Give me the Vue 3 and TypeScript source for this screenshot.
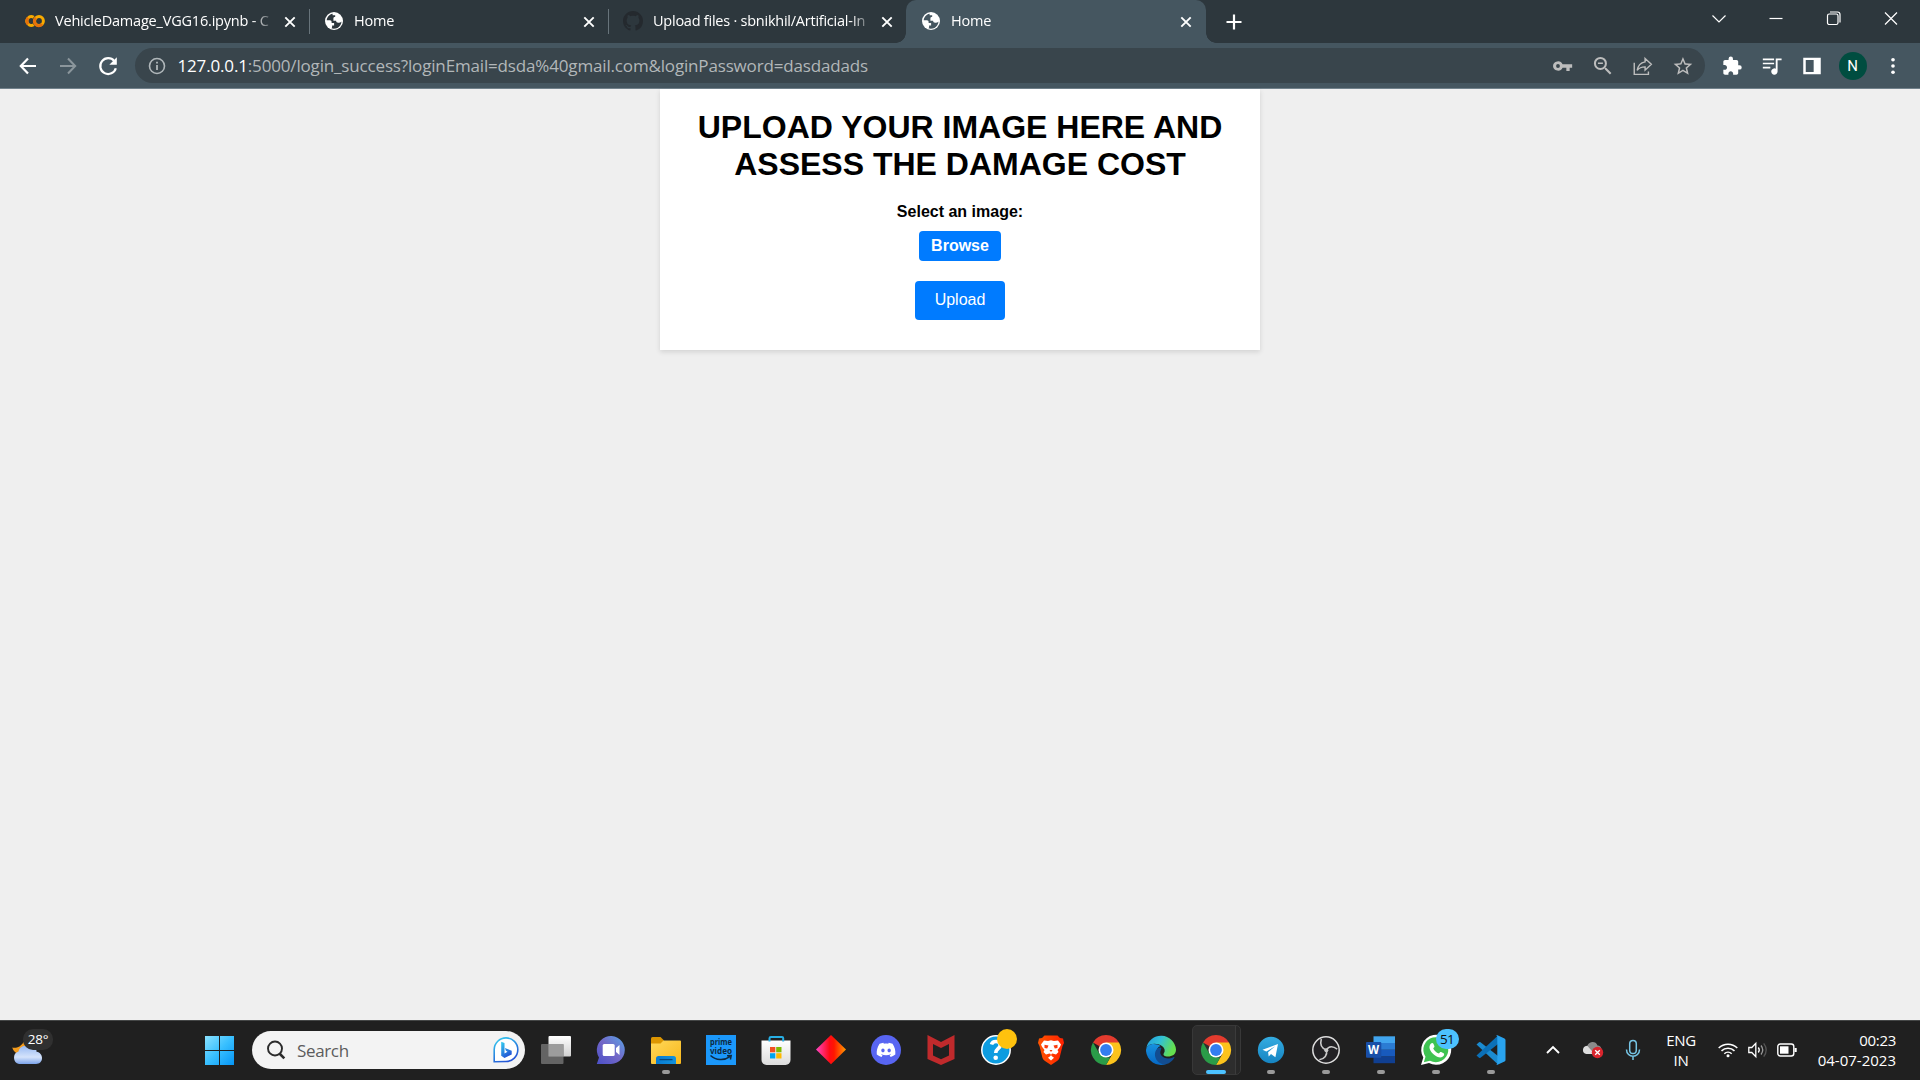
<script setup lang="ts">
interface Tab {
  title: string
  icon: 'colab' | 'globe' | 'github'
  active?: boolean
  divider?: boolean
}

interface App {
  name: string
  state?: 'open' | 'active'
}

const tabs: Tab[] = [
  { title: 'VehicleDamage_VGG16.ipynb - C', icon: 'colab', divider: true },
  { title: 'Home', icon: 'globe', divider: true },
  { title: 'Upload files · sbnikhil/Artificial-In', icon: 'github' },
  { title: 'Home', icon: 'globe', active: true },
]

const apps: App[] = [
  { name: 'taskview' },
  { name: 'chat' },
  { name: 'explorer', state: 'open' },
  { name: 'prime' },
  { name: 'store' },
  { name: 'diamond' },
  { name: 'discord' },
  { name: 'mcafee' },
  { name: 'help' },
  { name: 'brave' },
  { name: 'chrome' },
  { name: 'edge' },
  { name: 'chrome', state: 'active' },
  { name: 'telegram', state: 'open' },
  { name: 'obs', state: 'open' },
  { name: 'word', state: 'open' },
  { name: 'whatsapp', state: 'open' },
  { name: 'vscode', state: 'open' },
]
</script>

<template>
  <div class="screen">
    <header class="tabstrip">
      <div class="tabs">
        <div v-for="(tab, i) in tabs" :key="i" class="tab" :class="[tab.icon, { active: tab.active, divider: tab.divider }]">
          <svg v-if="tab.icon === 'colab'" class="favicon" viewBox="0 0 20 20" fill="none" stroke-width="3">
            <circle cx="14" cy="10" r="4.4" stroke="#f9ab00" />
            <path d="M10.9 6.9a4.4 4.4 0 1 0 6.2 6.2" stroke="#e8710a" />
            <path d="M8.7 6.3A4.4 4.4 0 1 0 8.7 13.7" stroke="#f9ab00" />
            <path d="M3.2 6.9a4.4 4.4 0 0 0 0 6.2" stroke="#e8710a" />
          </svg>
          <svg v-else-if="tab.icon === 'globe'" class="favicon" viewBox="0 0 20 20">
            <circle cx="9" cy="10" r="9" fill="#fff" />
            <path class="sea" d="M7.600 2.700C4.400 3.300 2 6 1.700 9.200h3.200c1.200 0 1.700.8 1.700 1.800v1.100h2.500v2.500h-2v1.400c0 .7-.4 1.200-.9 1.300 3.300 1.200 7.200 0 9.100-3.100.8-1.200 1.100-2.600 1.100-3.800-.8 1-2 1.300-3.100 1.300-1.500 0-2.200-.8-2.200-2H8.400V7.500c0-1.100.7-1.800 1.800-1.800V4.200H7.600z" />
          </svg>
          <svg v-else class="favicon" viewBox="0 0 16 16" fill="#24292e">
            <path d="M8 0C3.580 0 0 3.580 0 8c0 3.540 2.290 6.530 5.470 7.590.4.070.55-.17.55-.38 0-.19-.01-.82-.01-1.490-2.010.37-2.530-.49-2.690-.94-.09-.23-.48-.94-.82-1.130-.28-.15-.68-.52-.01-.53.63-.01 1.080.58 1.230.82.72 1.210 1.870.87 2.330.66.070-.52.28-.87.51-1.070-1.780-.2-3.640-.89-3.640-3.950 0-.87.31-1.590.82-2.150-.08-.2-.36-1.020.08-2.120 0 0 .67-.21 2.200.82.64-.18 1.320-.27 2-.27.68 0 1.360.09 2 .27 1.530-1.040 2.200-.82 2.200-.82.44 1.100.16 1.920.08 2.120.51.56.82 1.270.82 2.150 0 3.070-1.870 3.750-3.650 3.950.29.25.54.73.54 1.480 0 1.070-.01 1.930-.01 2.200 0 .21.15.46.55.38A8.013 8.013 0 0016 8c0-4.420-3.580-8-8-8z" />
          </svg>
          <span class="title">{{ tab.title }}</span>
          <svg class="close" viewBox="0 0 12 12"><path d="M1.300 1.300l9.400 9.400M10.700 1.300l-9.400 9.400" stroke="#fff" stroke-width="1.900" /></svg>
        </div>
      </div>
      <svg class="plus" viewBox="0 0 16 16"><path d="M8 .5v15M.5 8h15" stroke="#fff" stroke-width="2.200" /></svg>
      <div class="window-controls">
        <svg viewBox="0 0 16 16"><path d="M1.500 5.500L8 12l6.500-6.500" /></svg>
        <svg viewBox="0 0 16 16"><path d="M1.500 8.500h13" /></svg>
        <svg viewBox="0 0 16 16"><rect x="1.500" y="4" width="10.500" height="10.500" rx="1.800" /><path d="M4 2h7.500a2.500 2.500 0 0 1 2.500 2.500v8" /></svg>
        <svg viewBox="0 0 16 16"><path d="M2 2.500l12 12M14 2.500l-12 12" /></svg>
      </div>
    </header>

    <div class="toolbar">
      <div class="nav">
        <svg viewBox="0 0 20 20"><path d="M18 10H3M10 2.500L2.800 10l7.200 7.500" fill="none" stroke="#fff" stroke-width="2.200" /></svg>
        <svg viewBox="0 0 20 20"><path d="M2 10h15M10 2.500l7.200 7.500-7.200 7.500" fill="none" stroke="#8b969c" stroke-width="2" /></svg>
        <svg viewBox="0 0 20 20"><path d="M16.300 5.100A7.900 7.900 0 1 0 17.800 12.200" fill="none" stroke="#fff" stroke-width="2.200" /><path d="M18.800 1.200v7.500h-7.500z" fill="#fff" /></svg>
      </div>
      <div class="omnibox">
        <svg class="info" viewBox="0 0 18 18"><circle cx="9" cy="9" r="7.500" fill="none" stroke="#b0b7ba" stroke-width="1.600" /><path d="M9 8v5M9 4.800v1.700" stroke="#b0b7ba" stroke-width="1.800" /></svg>
        <span class="url"><b>127.0.0.1</b>:5000/login_success?loginEmail=dsda%40gmail.com&amp;loginPassword=dasdadads</span>
        <div class="omni-actions">
          <svg viewBox="0 0 24 24" fill="#bdbdbd"><path d="M11.500 10A6 6 0 0 0 0 12a6 6 0 0 0 11.500 2H16v4h4v-4h3v-4zM6 14.300a2.300 2.300 0 1 1 0-4.600 2.300 2.300 0 0 1 0 4.600z" /></svg>
          <svg viewBox="0 0 24 24" fill="#bdbdbd"><path d="M15.500 14h-.79l-.28-.27A6.471 6.471 0 0 0 16 9.500 6.500 6.500 0 1 0 9.500 16c1.610 0 3.090-.59 4.230-1.570l.27.28v.79l5 4.990L20.490 19zm-6 0C7.010 14 5 11.990 5 9.500S7.010 5 9.500 5 14 7.010 14 9.500 11.990 14 9.500 14zM7 8.700h5v1.500H7z" transform="translate(-2.500 -2.500) scale(1.200)" /></svg>
          <svg viewBox="0 0 24 24" fill="none" stroke="#bdbdbd" stroke-width="1.700"><path d="M1.500 8v14h17v-3.500" /><path d="M14.500 3l7.500 7-7.500 7v-4c-4 0-7.300 1.300-9.500 4.300.8-5.300 4-9.300 9.500-10.300z" /></svg>
          <svg viewBox="0 0 24 24" fill="#bdbdbd"><path d="M22 9.240l-7.190-.62L12 2 9.190 8.630 2 9.240l5.460 4.730L5.820 21 12 17.270 18.180 21l-1.630-7.030L22 9.240zM12 15.400l-3.760 2.270 1-4.280-3.320-2.880 4.380-.38L12 6.100l1.710 4.040 4.380.38-3.320 2.880 1 4.280z" transform="translate(-1.500 -1) scale(1.120)" /></svg>
        </div>
      </div>
      <div class="extensions">
        <svg viewBox="0 0 24 24" fill="#fff"><path transform="translate(-.5 -.5) scale(1.050)" d="M20.500 11H19V7c0-1.100-.9-2-2-2h-4V3.500a2.500 2.500 0 0 0-5 0V5H4c-1.100 0-1.990.9-1.990 2v3.800H3.500c1.490 0 2.700 1.210 2.700 2.700s-1.210 2.700-2.700 2.700H2V20c0 1.100.9 2 2 2h3.800v-1.500c0-1.490 1.210-2.700 2.700-2.700s2.700 1.210 2.700 2.700V22H17c1.100 0 2-.9 2-2v-4h1.500a2.500 2.500 0 0 0 0-5z" /></svg>
        <svg viewBox="0 0 24 24" fill="#fff"><path d="M14.500 3H1v2h13.500zM14.500 8H1v2h13.500zM1 15h9v-2H1zM16.500 3v12.200a3.800 3.800 0 1 0 2.200 3.500V5.200h4.800V3z" /></svg>
        <svg viewBox="0 0 24 24"><path d="M1.500 2h21v20h-21zM4.500 4.800v14.400H14V4.800z" fill="#fff" fill-rule="evenodd" /></svg>
        <span class="avatar">N</span>
        <svg class="more" viewBox="0 0 24 24" fill="#fff"><circle cx="12" cy="4.500" r="2.200" /><circle cx="12" cy="12" r="2.200" /><circle cx="12" cy="19.500" r="2.200" /></svg>
      </div>
    </div>

    <main class="page">
      <section class="card">
        <h1>UPLOAD YOUR IMAGE HERE AND ASSESS THE DAMAGE COST</h1>
        <label class="prompt">Select an image:</label>
        <label class="browse">Browse</label>
        <button type="button" class="upload">Upload</button>
      </section>
    </main>

    <footer class="taskbar">
      <div class="weather">
        <svg viewBox="0 0 32 26">
          <defs><linearGradient id="cloud" x1="0" y1="0" x2="0" y2="1"><stop offset="0" stop-color="#8fb4f2" /><stop offset=".65" stop-color="#d5e3fb" /><stop offset="1" stop-color="#7ba3ea" /></linearGradient></defs>
          <path d="M.3 8.500C4 9.500 9 8 11.500 3c4 3 3 10-2 12-4 1-8-2-9.200-6.500z" fill="#f29b1d" />
          <path d="M7 25a6.500 6.500 0 0 1-.5-12.500C7.500 8 11 6.500 14 7c3-3 8-2 9.500 2 1 2 1 3 1 3.800C32 14 32 25 24 25z" fill="url(#cloud)" />
        </svg>
        <span class="temp">28°</span>
      </div>

      <svg class="start" viewBox="0 0 29 29">
        <defs><linearGradient id="win" x1="0" y1="0" x2="1" y2="1"><stop offset="0" stop-color="#8be2ff" /><stop offset=".5" stop-color="#38bfff" /><stop offset="1" stop-color="#0595f5" /></linearGradient></defs>
        <path d="M0 0h14v14H0zM15 0h14v14H15zM0 15h14v14H0zM15 15h14v14H15z" fill="url(#win)" />
      </svg>

      <div class="search">
        <svg class="lens" viewBox="0 0 20 20"><circle cx="9" cy="8.500" r="7" fill="none" stroke="#2b2b2b" stroke-width="1.900" /><path d="M13.500 13.500l4.800 4.800" stroke="#2b2b2b" stroke-width="2.600" /></svg>
        <span>Search</span>
        <svg class="bing" viewBox="0 0 26 26">
          <defs><linearGradient id="bing" x1="0" y1="0" x2=".5" y2="1"><stop offset="0" stop-color="#35d0f0" /><stop offset="1" stop-color="#2355d5" /></linearGradient></defs>
          <path d="M1.200 24.800V12.500A11.800 11.800 0 1 1 13 24.500z" fill="#fff" stroke="url(#bing)" stroke-width="1.600" />
          <path d="M8.200 4.800l3.300 1.300v10.300l3-1.700-1.600-1-1-2.800 6.800 2.900v3.700L11.500 21l-3.300-2.200z" fill="url(#bing)" />
        </svg>
      </div>

      <div class="apps">
        <div v-for="(app, i) in apps" :key="i" class="app" :class="app.state">
          <svg v-if="app.name === 'taskview'" viewBox="0 0 30 30">
            <defs><linearGradient id="tv" x1="0" y1="0" x2="0" y2="1"><stop offset="0" stop-color="#fff" /><stop offset="1" stop-color="#d0d0d0" /></linearGradient></defs>
            <rect x="7.500" y="1" width="22.500" height="20.500" rx="1" fill="url(#tv)" /><rect y="9" width="22.500" height="20" rx="1" fill="#6c6c6c" fill-opacity=".9" /><path d="M7.500 9h15v12.500h-15z" fill="#9c9c9c" />
          </svg>
          <svg v-else-if="app.name === 'chat'" viewBox="0 0 30 30">
            <defs><linearGradient id="chat" x1="0" y1="1" x2="1" y2="0"><stop offset="0" stop-color="#4b50c8" /><stop offset=".5" stop-color="#7367c7" /><stop offset="1" stop-color="#58a5e8" /></linearGradient></defs>
            <path d="M.8 29l2.200-6.500A14 14 0 1 1 15 29z" fill="url(#chat)" /><rect x="6.700" y="9" width="12" height="12" rx="1.500" fill="#fff" /><path d="M20 13l3.500-3v10L20 17z" fill="#fff" />
          </svg>
          <svg v-else-if="app.name === 'explorer'" viewBox="0 0 30 30">
            <defs><linearGradient id="fold" x1="0" y1="0" x2="1" y2="1"><stop offset="0" stop-color="#ffd85a" /><stop offset="1" stop-color="#f9b81b" /></linearGradient><linearGradient id="fblue" x1="0" y1="0" x2="1" y2="0"><stop offset="0" stop-color="#087bd2" /><stop offset="1" stop-color="#1292dc" /></linearGradient></defs>
            <path d="M0 3.500Q0 2 1.500 2h8l3.500 3.500V9H0z" fill="#dc9602" /><path d="M0 8.500h9.500l3-3H29q1 0 1 1V28q0 1-1 1H1q-1 0-1-1z" fill="url(#fold)" /><path d="M5 29v-5.500q0-2.500 2.500-2.500h15q2.500 0 2.500 2.500V29z" fill="url(#fblue)" /><path d="M8.500 24.600h13" stroke="#07487e" stroke-width="1.300" />
          </svg>
          <svg v-else-if="app.name === 'prime'" viewBox="0 0 30 30">
            <path d="M0 0h30v30H0z" fill="#1b98fb" />
            <text x="4" y="10" textLength="22" lengthAdjust="spacingAndGlyphs" class="prime-text">prime</text>
            <text x="4" y="18.500" textLength="22" lengthAdjust="spacingAndGlyphs" class="prime-text">video</text>
            <path d="M4.500 20.500c5.500 5 13.500 5.500 19.500 1.200M21 20.700l4.200-.2-.8 4" fill="none" stroke="#0d2a42" stroke-width="1.500" />
          </svg>
          <svg v-else-if="app.name === 'store'" viewBox="0 0 30 30">
            <defs><linearGradient id="bag" x1="0" y1="0" x2="0" y2="1"><stop offset="0" stop-color="#fff" /><stop offset="1" stop-color="#dcdcdc" /></linearGradient></defs>
            <path d="M.5 5.500h29V25a5 5 0 0 1-5 5h-19a5 5 0 0 1-5-5z" fill="url(#bag)" /><path d="M8.500 6.500V3.300Q8.500 2 10 2h11q1.200 0 1.200 1.300v3.200" fill="none" stroke="#27afe5" stroke-width="2" /><path d="M9 12h5.300v5.300H9z" fill="#f25022" /><path d="M15.200 12h5.300v5.300h-5.300z" fill="#7fba00" /><path d="M9 18.200h5.300v5.300H9z" fill="#00a4ef" /><path d="M15.200 18.200h5.300v5.300h-5.300z" fill="#ffb900" />
          </svg>
          <svg v-else-if="app.name === 'diamond'" viewBox="0 0 30 30">
            <defs><linearGradient id="dia"><stop offset="0" stop-color="#ff46c5" /><stop offset=".45" stop-color="#ff0a16" /><stop offset=".6" stop-color="#ff1600" /><stop offset="1" stop-color="#ff9b00" /></linearGradient></defs>
            <path d="M15 0l15 14.500L15 29.300 0 14.500z" fill="url(#dia)" />
          </svg>
          <svg v-else-if="app.name === 'discord'" viewBox="0 0 30 30">
            <circle cx="15" cy="15" r="15" fill="#5865f2" />
            <path transform="translate(5.700 5.400) scale(.78)" fill="#fff" d="M20.317 4.370a19.790 19.790 0 00-4.885-1.515l-.687 1.287c-1.845-.276-3.680-.276-5.487 0l-.696-1.287A19.740 19.740 0 003.677 4.370C.533 9.046-.319 13.580.1 18.058c2.050 1.560 4.100 2.500 6.100 3.070l1.310-2.020-1.950-1 .44-.42c3.930 1.790 8.180 1.790 12.060 0l.45.420-1.950 1 1.310 2.020c1.960-.6 3.950-1.520 6-3.030.5-5.177-.838-9.674-3.549-13.728zM8.020 15.331c-1.183 0-2.157-1.086-2.157-2.419s.956-2.419 2.157-2.419c1.211 0 2.176 1.095 2.157 2.419 0 1.333-.956 2.419-2.157 2.419zm7.975 0c-1.183 0-2.157-1.086-2.157-2.419s.955-2.419 2.157-2.419c1.211 0 2.176 1.095 2.157 2.419 0 1.333-.946 2.419-2.157 2.419z" />
          </svg>
          <svg v-else-if="app.name === 'mcafee'" viewBox="0 0 30 30">
            <path d="M1.500 0L15 7 28.500 0v24L15 30 1.500 24zM7 9v11.500l8 3.700 8-3.700V9l-8 4z" fill="#c02a2c" fill-rule="evenodd" />
          </svg>
          <svg v-else-if="app.name === 'help'" viewBox="0 0 30 30">
            <circle cx="15" cy="15" r="14.200" fill="#0d9ce0" stroke="#fff" stroke-width="1.500" /><path d="M10.500 9.500c1-4 8.700-4 8.700.5 0 3.800-4.500 3.700-4.500 8" fill="none" stroke="#fff" stroke-width="3.600" /><circle cx="14.700" cy="22.800" r="2.300" fill="#fff" />
            <circle cx="26" cy="4" r="10" fill="#ffc20e" />
          </svg>
          <svg v-else-if="app.name === 'brave'" viewBox="0 0 30 30">
            <defs><linearGradient id="brave"><stop offset="0" stop-color="#ff5500" /><stop offset="1" stop-color="#ff2000" /></linearGradient></defs>
            <path d="M8.500.5h13L24 3l3 .5 1 4.500-1.500 3-3 12q-.8 2-2.500 3L15 30l-6-4q-1.700-1-2.500-3l-3-12L2 8l1-4.500L6 3z" fill="url(#brave)" />
            <path d="M8 5.500l4 .5 3-.7 3 .7 4-.5 3 4-1 2.200-2.500 3.300 1 2-2.500 2.500-3.500-1-1.200.6v1.700l2.700 2-3 2.700-3-2.700 2.700-2v-1.700l-1.200-.6-3.500 1L7.500 17l1-2L6 11.700 5 9.500z" fill="#fff" /><path d="M8.500 9.700l4 .8-1.300 3-2.700-.5zM21.500 9.700l-4 .8 1.300 3 2.700-.5zM13.500 15h3L15 17z" fill="#fb3b0e" />
          </svg>
          <svg v-else-if="app.name === 'chrome'" viewBox="0 0 30 30">
            <path d="M15 15L2 7.500A15 15 0 0 1 28 7.500z" fill="#e33b2e" /><path d="M15 7.500h13A15 15 0 0 1 15 30l6.500-11.250z" fill="#fcc31c" /><path d="M2 7.500l6.500 11.250L15 22.500h4.300L15 30A15 15 0 0 1 2 7.500z" fill="#2a9c48" /><circle cx="15" cy="15" r="7.500" fill="#fff" /><circle cx="15" cy="15" r="5.900" fill="#337df0" />
          </svg>
          <svg v-else-if="app.name === 'edge'" viewBox="0 0 30 30">
            <defs><linearGradient id="ed1" x1="0" y1="0" x2="1" y2=".35"><stop offset="0" stop-color="#209be0" /><stop offset=".5" stop-color="#32c1d5" /><stop offset="1" stop-color="#65e04f" /></linearGradient><linearGradient id="ed2" x1="0" y1="0" x2="0" y2="1"><stop offset="0" stop-color="#1791df" /><stop offset="1" stop-color="#0668c4" /></linearGradient></defs>
            <path d="M.3 13A15 15 0 0 1 30 14.500c0 5-4 7-8 7-3.500 0-5.500-1.600-4-3.500 1.500-2.400.5-5-2-7C11 7.500 3 8 .3 13z" fill="url(#ed1)" /><path d="M0 16C0 8.500 9 7.500 14.500 11c-3 1-4.200 4-4.200 7 0 5 4 10 9.700 11A15 15 0 0 1 0 16z" fill="url(#ed2)" /><path d="M11.500 13.500c-5.500 5-1.500 15.500 7 16 4 0 8-3.500 9.800-6.700.4-.8-.3-1-.8-.6-6.500 3-12.700 0-13.200-4.200-.2-2 1-3.500 1-4.500s-2-1.500-3.800 0z" fill="#124d91" />
          </svg>
          <svg v-else-if="app.name === 'telegram'" viewBox="0 0 30 30">
            <defs><linearGradient id="tg" x1="0" y1="0" x2="0" y2="1"><stop offset="0" stop-color="#34ace1" /><stop offset="1" stop-color="#1684c2" /></linearGradient></defs>
            <circle cx="15" cy="15" r="13.200" fill="url(#tg)" /><path d="M6.500 14.700L22 9l-2.600 13.300-4.400-3.200-2.300 2.400-.6-4.300 7.200-6-9 5.300z" fill="#fff" />
          </svg>
          <svg v-else-if="app.name === 'obs'" viewBox="0 0 30 30">
            <circle cx="15" cy="15" r="13.200" fill="#222124" stroke="#ddd" stroke-width="1.500" />
            <g fill="none" stroke="#c9c9c9" stroke-width="1.600"><path d="M10.300 4c-1.500 5.500.5 9.500 5.200 11" /><path d="M26.200 14.200c-4.300-3.300-8.300-3.300-10.700.8" /><path d="M8.300 24.700c5.400-.8 8.200-4.600 7.200-9.700" /></g><circle cx="15.300" cy="15.200" r="2" fill="#c9c9c9" />
          </svg>
          <svg v-else-if="app.name === 'word'" viewBox="0 0 30 30">
            <path d="M7.500 1.300H29V8H7.500z" fill="#41a5ee" /><path d="M7.500 8H29v6.800H7.500z" fill="#2b7cd3" /><path d="M7.500 14.800H29v6.800H7.500z" fill="#185abd" /><path d="M7.500 21.600H29v6.600H7.500z" fill="#103f91" /><rect y="7" width="15.300" height="15.700" rx="1" fill="#194fa8" /><text x="7.600" y="19" text-anchor="middle" class="word-text">W</text>
          </svg>
          <svg v-else-if="app.name === 'whatsapp'" viewBox="0 0 30 30">
            <path d="M0 30l2.300-7.500A15 15 0 1 1 8 28z" fill="#fff" /><path d="M2.800 27.200l1.700-5.500A12.500 12.500 0 1 1 9 25.700z" fill="#3fc351" /><path d="M10 8.500c1-.9 1.900-.8 2.400.2l1 2.400c.3.800-.4 1.500-1.200 2.300 1.400 2.500 3 4 5.600 5 1-1.200 1.500-1.800 2.300-1.400l2.500 1.200c1 .6.5 2-.2 2.900-2 2.300-6 1.400-9.600-1.600-3.700-3.100-6-7.600-2.800-11z" fill="#fff" />
          </svg>
          <svg v-else viewBox="0 0 30 30">
            <path d="M.5 9.500L3 7.300q.7-.5 1.500 0L22 21v8.500z" fill="#1b8bd0" /><path d="M.5 20.500L3 22.700q.7.500 1.500 0L22 9V.5z" fill="#0b70b7" /><path d="M21.500.2l7 3.300q1 .5 1 1.600v19.800q0 1.100-1 1.600l-7 3.300q-.9.200-1.500-.5 1.300.4 1.300-1.300V2q0-1.700-1.300-1.300.6-.7 1.500-.5z" fill="#29a3ee" />
          </svg>
          <span v-if="app.name === 'whatsapp'" class="badge">51</span>
        </div>
      </div>

      <div class="tray">
        <svg class="t-chevron" viewBox="0 0 16 16"><path d="M2 11l6-6 6 6" fill="none" stroke="#fff" stroke-width="1.900" /></svg>
        <svg class="t-cloud" viewBox="0 0 22 20"><path d="M5 14a4.500 4.500 0 0 1 .5-8.500C7 1 14 .5 15.500 5.500c5 0 6 8.500 0 8.500z" fill="#8b8b8b" /><path d="M4.500 14a4 4 0 0 1 1-8l7 8z" fill="#ddd" /><circle cx="15.500" cy="12.500" r="5.700" fill="#d9252d" /><path d="M13.200 10.200l4.600 4.600M17.800 10.200l-4.600 4.600" stroke="#fff" stroke-width="1.300" /></svg>
        <svg class="t-mic" viewBox="0 0 16 22" fill="none" stroke="#76c5e5" stroke-width="1.500"><rect x="4.700" y="1.500" width="6.600" height="13" rx="3.300" /><path d="M1.500 10.500c0 9 13 9 13 0M8 17.500V21" /></svg>
        <div class="lang">ENG<br />IN</div>
        <svg class="t-wifi" viewBox="0 0 20 16" fill="none" stroke="#fff" stroke-width="1.500"><path d="M.7 6a13.200 13.200 0 0 1 18.600 0M3.500 8.900a9.300 9.300 0 0 1 13 0M6.300 11.800a5.400 5.400 0 0 1 7.400 0" /><circle cx="10" cy="13.800" r="1.500" fill="#fff" stroke="none" /></svg>
        <svg class="t-vol" viewBox="0 0 20 16" fill="none" stroke="#fff" stroke-width="1.300"><path d="M.8 5.500h3l4-4.200v13.400l-4-4.200h-3z" /><path d="M10.300 5.500q2 2.500 0 5" /><path d="M13 3.500q3.500 4.500 0 9" stroke="#999" /><path d="M15.700 1.300q5 6.700 0 13.400" stroke="#555" /></svg>
        <svg class="t-bat" viewBox="0 0 20 14"><rect x=".8" y="1" width="16" height="12" rx="2.500" fill="none" stroke="#fff" stroke-width="1.400" /><rect x="3" y="3.300" width="8.500" height="7.400" fill="#fff" /><path d="M17.500 5h2.200v4h-2.200z" fill="#fff" /></svg>
        <div class="clock"><span class="time">00:23</span><br />04-07-2023</div>
      </div>
    </footer>
  </div>
</template>

<style>
body {
  margin: 0;
  overflow: hidden;
}
</style>

<style scoped>
.screen {
  display: flex;
  flex-direction: column;
  width: 1920px;
  height: 1080px;
  overflow: hidden;
  font-family: 'Open Sans', 'Noto Sans', sans-serif;
}
svg {
  display: block;
  flex: none;
  overflow: visible;
}

.tabstrip {
  display: flex;
  height: 43px;
  background: #2d373d;
}
.tabs {
  display: flex;
  padding-left: 10px;
}
.tab {
  display: flex;
  align-items: center;
  box-sizing: border-box;
  position: relative;
  width: 299px;
  height: 43px;
  padding-left: 15px;
}
.tab.colab {
  width: 300px;
}
.tab.github {
  width: 298px;
  padding-left: 14px;
}
.tab.divider::after {
  content: '';
  position: absolute;
  right: 0;
  top: 9px;
  width: 1px;
  height: 25px;
  background: #68747b;
}
.tab.active {
  border-radius: 10px 10px 0 0;
  width: 300px;
  margin-left: -1px;
  padding-left: 16px;
  background: #455660;
}
.tab.active::before,
.tab.active::after {
  content: '';
  position: absolute;
  bottom: 0;
  width: 10px;
  height: 10px;
}
.tab.active::before {
  left: -10px;
  background: radial-gradient(circle at 0 0, transparent 9.5px, #455660 10px);
}
.tab.active::after {
  right: -10px;
  background: radial-gradient(circle at 100% 0, transparent 9.5px, #455660 10px);
}
.favicon {
  width: 20px;
  height: 20px;
  margin-top: -1px;
}
.sea {
  fill: #2d373d;
}
.active .sea {
  fill: #455660;
}
.title {
  width: 220px;
  margin: -2px 9px 0 9px;
  color: #fff;
  font-size: 14.5px;
  line-height: 22px;
  letter-spacing: -0.2px;
  white-space: nowrap;
  mask-image: linear-gradient(90deg, #000 198px, transparent 220px);
}
.colab .title {
  margin-left: 10px;
}
.github .title {
  margin-left: 10px;
  margin-right: 8px;
  letter-spacing: -0.24px;
}
.close {
  width: 12px;
  height: 12px;
}
.plus {
  width: 16px;
  height: 16px;
  margin: 13.5px 0 0 19.5px;
}
.window-controls {
  display: flex;
  gap: 41.3px;
  margin: 10px 21px 0 auto;
}
.window-controls svg {
  width: 16px;
  height: 16px;
  fill: none;
  stroke: #fff;
  stroke-width: 1.2;
}

.toolbar {
  display: flex;
  align-items: center;
  box-sizing: border-box;
  height: 46px;
  border-bottom: 1px solid #71818b;
  background: #455660;
}
.nav {
  display: flex;
  gap: 20px;
  width: 117.5px;
  padding-left: 17.5px;
}
.nav svg {
  width: 20px;
  height: 20px;
}
.omnibox {
  display: flex;
  align-items: center;
  box-sizing: border-box;
  width: 1570px;
  height: 35px;
  padding: 0 12.5px 0 13px;
  border-radius: 17.5px;
  background: #39454c;
}
.info {
  width: 18px;
  height: 18px;
}
.url {
  margin: 0 auto 0 11.5px;
  color: #b2b7b9;
  font-size: 17px;
  line-height: 24px;
  letter-spacing: -0.16px;
  white-space: nowrap;
}
.url b {
  color: #fff;
  font-weight: 400;
}
.omni-actions {
  display: flex;
  gap: 20px;
}
.omni-actions svg {
  width: 20px;
  height: 20px;
}
.extensions {
  display: flex;
  align-items: center;
  gap: 20px;
  padding-left: 17px;
}
.extensions svg {
  width: 20px;
  height: 20px;
}
.extensions .more {
  margin-left: -0.5px;
}
.avatar {
  width: 28px;
  height: 28px;
  margin: 0 -3.5px;
  border-radius: 50%;
  background: #004d40;
  color: #fff;
  font: 15px/28px Roboto, sans-serif;
  text-align: center;
}

.page {
  flex: none;
  height: 931px;
  background: #efefef;
}
.card {
  display: flex;
  flex-direction: column;
  align-items: center;
  box-sizing: border-box;
  width: 600px;
  height: 261px;
  margin: 0 auto;
  padding: 20px;
  background: #fff;
  box-shadow: 0 2px 5px rgba(0, 0, 0, 0.12);
  color: #000;
  font-family: 'Liberation Sans', Arial, sans-serif;
}
h1 {
  margin: 0 0 20px;
  font-size: 32px;
  line-height: 37px;
  text-align: center;
}
.prompt {
  font-size: 16px;
  font-weight: 700;
  line-height: 18px;
}
.browse {
  box-sizing: border-box;
  width: 82px;
  height: 30px;
  margin: 10px 0 20px;
  border-radius: 4px;
  background: #007bff;
  color: #fff;
  font-size: 16px;
  font-weight: 700;
  line-height: 29px;
  text-align: center;
}
.upload {
  width: 90px;
  height: 39px;
  padding: 0 0 2px;
  border: 0;
  border-radius: 4px;
  background: #007bff;
  color: #fff;
  font: 16px 'Liberation Sans', Arial, sans-serif;
}

.taskbar {
  display: flex;
  align-items: center;
  height: 60px;
  background: #202020;
  box-shadow: inset 0 1px #454747;
  color: #fff;
}
.weather {
  position: relative;
  width: 193px;
  padding-left: 12px;
}
.weather svg {
  width: 32px;
  height: 26px;
  margin-top: 3px;
}
.temp {
  position: absolute;
  left: 23px;
  top: -7px;
  width: 30px;
  height: 21px;
  border-radius: 10px;
  background: #303030;
  font-size: 13.5px;
  line-height: 20px;
  letter-spacing: -0.2px;
  text-align: center;
}
.start {
  width: 29px;
  height: 29px;
}
.search {
  display: flex;
  align-items: center;
  box-sizing: border-box;
  width: 273px;
  height: 38px;
  margin-left: 18px;
  padding: 0 6.5px 0 13.5px;
  border-radius: 19px;
  background: #f3f3f3;
  color: #5c5c5c;
  font-size: 17px;
  letter-spacing: -0.35px;
}
.search span {
  margin: 0 auto 0 11.5px;
}
.lens {
  width: 20px;
  height: 20px;
}
.bing {
  width: 26px;
  height: 26px;
}
.apps {
  display: flex;
  margin-left: 3.5px;
}
.app {
  display: flex;
  align-items: center;
  justify-content: center;
  position: relative;
  width: 55px;
  height: 50px;
}
.app svg {
  position: relative;
  width: 30px;
  height: 30px;
}
.app.open::after,
.app.active::after {
  content: '';
  position: absolute;
  bottom: 1px;
  left: 23.5px;
  width: 8px;
  height: 4px;
  border-radius: 2px;
  background: #9a9a9a;
}
.app.active::after {
  left: 17.5px;
  width: 20px;
  background: #4cc2ff;
}
.app.active::before {
  content: '';
  position: absolute;
  left: 3px;
  top: 0;
  box-sizing: border-box;
  width: 49px;
  height: 50px;
  border: 1px solid #383838;
  border-radius: 5px;
  background: linear-gradient(90deg, #2d2d2d 42px, #3b3b3b 42px, #3b3b3b 43px, #272727 43px);
}
.prime-text {
  fill: #0d2a42;
  font: 700 8.5px 'Noto Sans', sans-serif;
}
.word-text {
  fill: #fff;
  font: 700 11.5px 'Open Sans', sans-serif;
}
.badge {
  position: absolute;
  left: 27px;
  top: 4px;
  width: 23px;
  height: 20px;
  border-radius: 10px;
  background: #4cc2ff;
  color: #111;
  font-size: 13.5px;
  line-height: 20px;
  letter-spacing: -0.6px;
  text-align: center;
}
.tray {
  display: flex;
  align-items: center;
  margin: 0 24px 0 auto;
  font-size: 15px;
  line-height: 20px;
  letter-spacing: -0.35px;
}
.t-chevron {
  width: 16px;
  height: 16px;
  margin-right: 21px;
}
.t-cloud {
  width: 22px;
  height: 20px;
  margin-right: 21px;
}
.t-mic {
  width: 16px;
  height: 22px;
  margin-right: 18px;
}
.lang {
  width: 44px;
  margin-right: 15px;
  text-align: center;
}
.t-wifi {
  width: 20px;
  height: 16px;
  margin-right: 10px;
}
.t-vol {
  width: 20px;
  height: 16px;
  margin-right: 9px;
}
.t-bat {
  width: 20px;
  height: 14px;
}
.clock {
  width: 99px;
  letter-spacing: 0;
  white-space: nowrap;
  text-align: right;
}
.time {
  letter-spacing: -0.3px;
}
</style>
